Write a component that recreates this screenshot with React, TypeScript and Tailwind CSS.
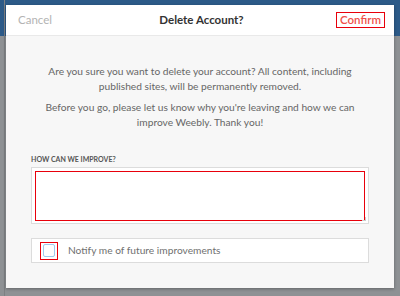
import React from "react";

const App: React.FC = () => {
    return (
        <div className="relative w-[400px] h-[296px] overflow-hidden bg-[#8e9194]" style={{ fontFamily: "Lato, 'Liberation Sans', sans-serif" }}>
            {/* page behind the overlay */}
            <div className="absolute inset-x-0 top-0 h-[36px] bg-[#2c5a88]" />
            <div className="absolute left-[4px] top-0 bottom-0 w-px bg-[#7d8083]" />

            <div className="relative pt-[5px] pl-[6px]">
                <div className="w-[388px] h-[283px] bg-[#f7f7f7] flex flex-col shadow-[0_1px_3px_rgba(0,0,0,0.3)]">
                    <div className="h-[31px] bg-white border-b border-[#e9e9e9] flex items-center justify-between pl-[12px] pr-[9px] text-[11.5px]">
                        <span className="text-[#b3b3b3] w-[60px]">Cancel</span>
                        <span className="font-bold text-[#333]">Delete Account?</span>
                        <span className="w-[60px] flex justify-end">
                            <span className="w-[49px] h-[16px] border border-[#e8000b] flex items-center justify-center text-[#f0504a] font-semibold">Confirm</span>
                        </span>
                    </div>

                    <div className="pt-[28px] text-center text-[10.2px] leading-[14.5px] text-[#666]">
                        <p>Are you sure you want to delete your account? All content, including<br />published sites, will be permanently removed.</p>
                        <p className="mt-[7px]">Before you go, please let us know why you're leaving and how we can<br />improve Weebly. Thank you!</p>
                    </div>

                    <div className="px-[25px] mt-[26px]">
                        <div className="text-[7px] leading-[8px] font-bold text-[#555]">HOW CAN WE IMPROVE?</div>
                        <div className="relative mt-[4px] h-[57px] bg-white border border-[#dcdcdc] pt-[3px] px-[3px]">
                            <div className="h-[50px] border border-[#e8000b]" />
                            <div className="absolute right-[2px] bottom-[2px] w-[4px] h-[4px] border-r border-b border-[#ccc]" />
                        </div>

                        <div className="mt-[14px] h-[25px] bg-white border border-[#dcdcdc] flex items-center pl-[8px]">
                            <div className="w-[18px] h-[18px] border border-[#e8000b] flex items-center justify-center">
                                <div className="w-[12px] h-[13px] border border-[#9fcbef] rounded-[2px] bg-white" />
                            </div>
                            <span className="ml-[10px] text-[10.2px] text-[#707070]">Notify me of future improvements</span>
                        </div>
                    </div>
                </div>
            </div>
        </div>
    );
};

export default App;
